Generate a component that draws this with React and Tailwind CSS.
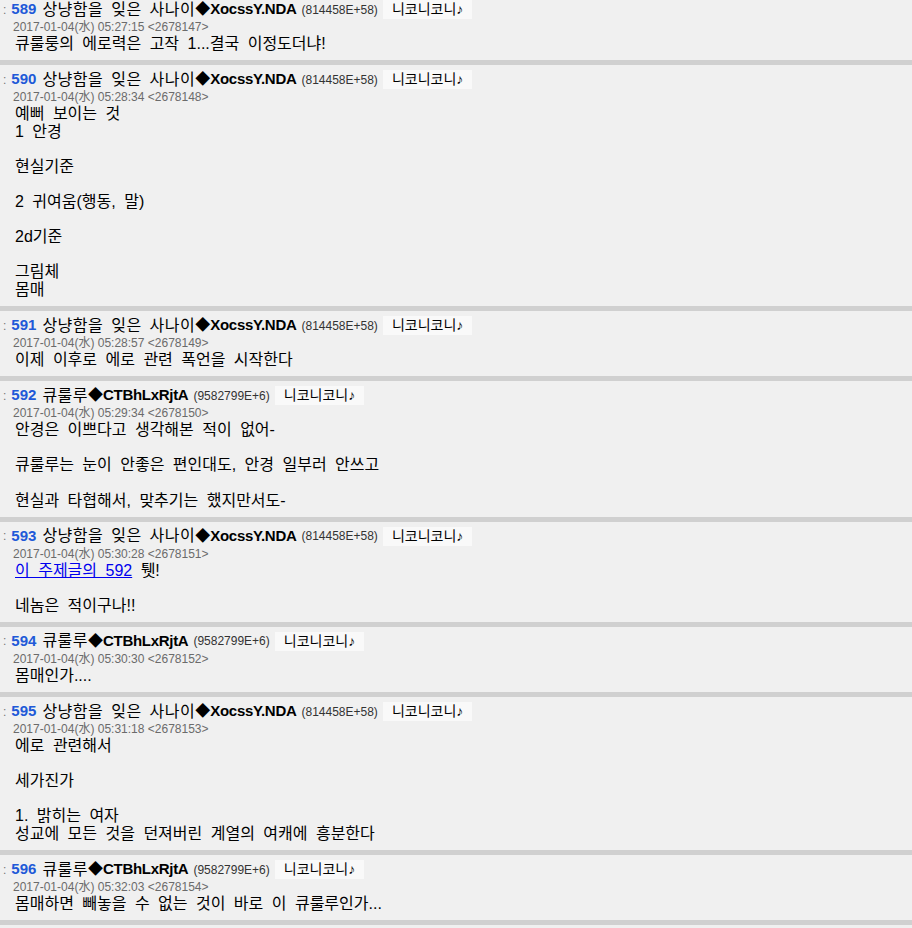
const A = { name: "상냥함을 잊은 사나이", trip: "XocssY.NDA", id: "(814458E+58)" };
const B = { name: "큐룰루", trip: "CTBhLxRjtA", id: "(9582799E+6)" };

const posts = [
  { no: 589, who: A, time: "05:27:15", seq: "2678147", lines: ["큐룰룽의 에로력은 고작 1...결국 이정도더냐!"] },
  {
    no: 590,
    who: A,
    time: "05:28:34",
    seq: "2678148",
    lines: ["예뻐 보이는 것", "1 안경", "", "현실기준", "", "2 귀여움(행동, 말)", "", "2d기준", "", "그림체", "몸매"],
  },
  { no: 591, who: A, time: "05:28:57", seq: "2678149", lines: ["이제 이후로 에로 관련 폭언을 시작한다"] },
  {
    no: 592,
    who: B,
    time: "05:29:34",
    seq: "2678150",
    lines: [
      "안경은 이쁘다고 생각해본 적이 없어-",
      "",
      "큐룰루는 눈이 안좋은 편인대도, 안경 일부러 안쓰고",
      "",
      "현실과 타협해서, 맞추기는 했지만서도-",
    ],
  },
  { no: 593, who: A, time: "05:30:28", seq: "2678151", link: true, lines: ["", "네놈은 적이구나!!"] },
  { no: 594, who: B, time: "05:30:30", seq: "2678152", lines: ["몸매인가...."] },
  {
    no: 595,
    who: A,
    time: "05:31:18",
    seq: "2678153",
    lines: ["에로 관련해서", "", "세가진가", "", "1. 밝히는 여자", "성교에 모든 것을 던져버린 계열의 여캐에 흥분한다"],
  },
  { no: 596, who: B, time: "05:32:03", seq: "2678154", lines: ["몸매하면 빼놓을 수 없는 것이 바로 이 큐룰루인가..."] },
];

function Post({ post, first }) {
  return (
    <div className={first ? "pb-[7.5px]" : "border-t-[5px] border-[#d0d0d0] pt-[5px] pb-[7.5px]"}>
      <div className="flex h-[19px] items-center whitespace-nowrap pl-[3px]">
        <span className="mr-[5px] text-[12px] text-[#777]">:</span>
        <span className="mr-[6px] text-[15px] font-bold text-[#2059d8]">{post.no}</span>
        <span className="text-[16px] tracking-[0.5px] text-black [word-spacing:3px]">{post.who.name}</span>
        <span className="text-[15px] text-black">◆</span>
        <span className="text-[15px] font-bold tracking-[-0.3px] text-black">{post.who.trip}</span>
        <span className="ml-[5px] text-[12px] text-[#333]">{post.who.id}</span>
        <span className="ml-[5px] flex h-full items-center bg-[#f9f9f9] px-[9px] text-[14px] text-black">
          니코니코니♪
        </span>
      </div>
      <div className="h-[16px] pl-[13px] text-[12px] leading-[16px] text-[#6b6b6b]">
        2017-01-04(水) {post.time} &lt;{post.seq}&gt;
      </div>
      <div className="pl-[15px] text-[16px] leading-[17.6px] text-black [word-spacing:4px]">
        {post.link && (
          <div className="h-[17.6px] whitespace-pre">
            <a href="#" className="text-[#0000ee] underline">
              이 주제글의 592
            </a>{" "}
            퉷!
          </div>
        )}
        {post.lines.map((line, i) => (
          <div key={i} className="h-[17.6px] whitespace-pre">
            {line}
          </div>
        ))}
      </div>
    </div>
  );
}

export default function App() {
  return (
    <div
      className="min-h-screen w-full bg-[#f0f0f0]"
      style={{ fontFamily: '"Liberation Sans", "Noto Sans CJK KR", sans-serif' }}
    >
      {posts.map((post, i) => (
        <Post key={post.no} post={post} first={i === 0} />
      ))}
      <div className="border-t-[5px] border-[#d0d0d0]" />
    </div>
  );
}
